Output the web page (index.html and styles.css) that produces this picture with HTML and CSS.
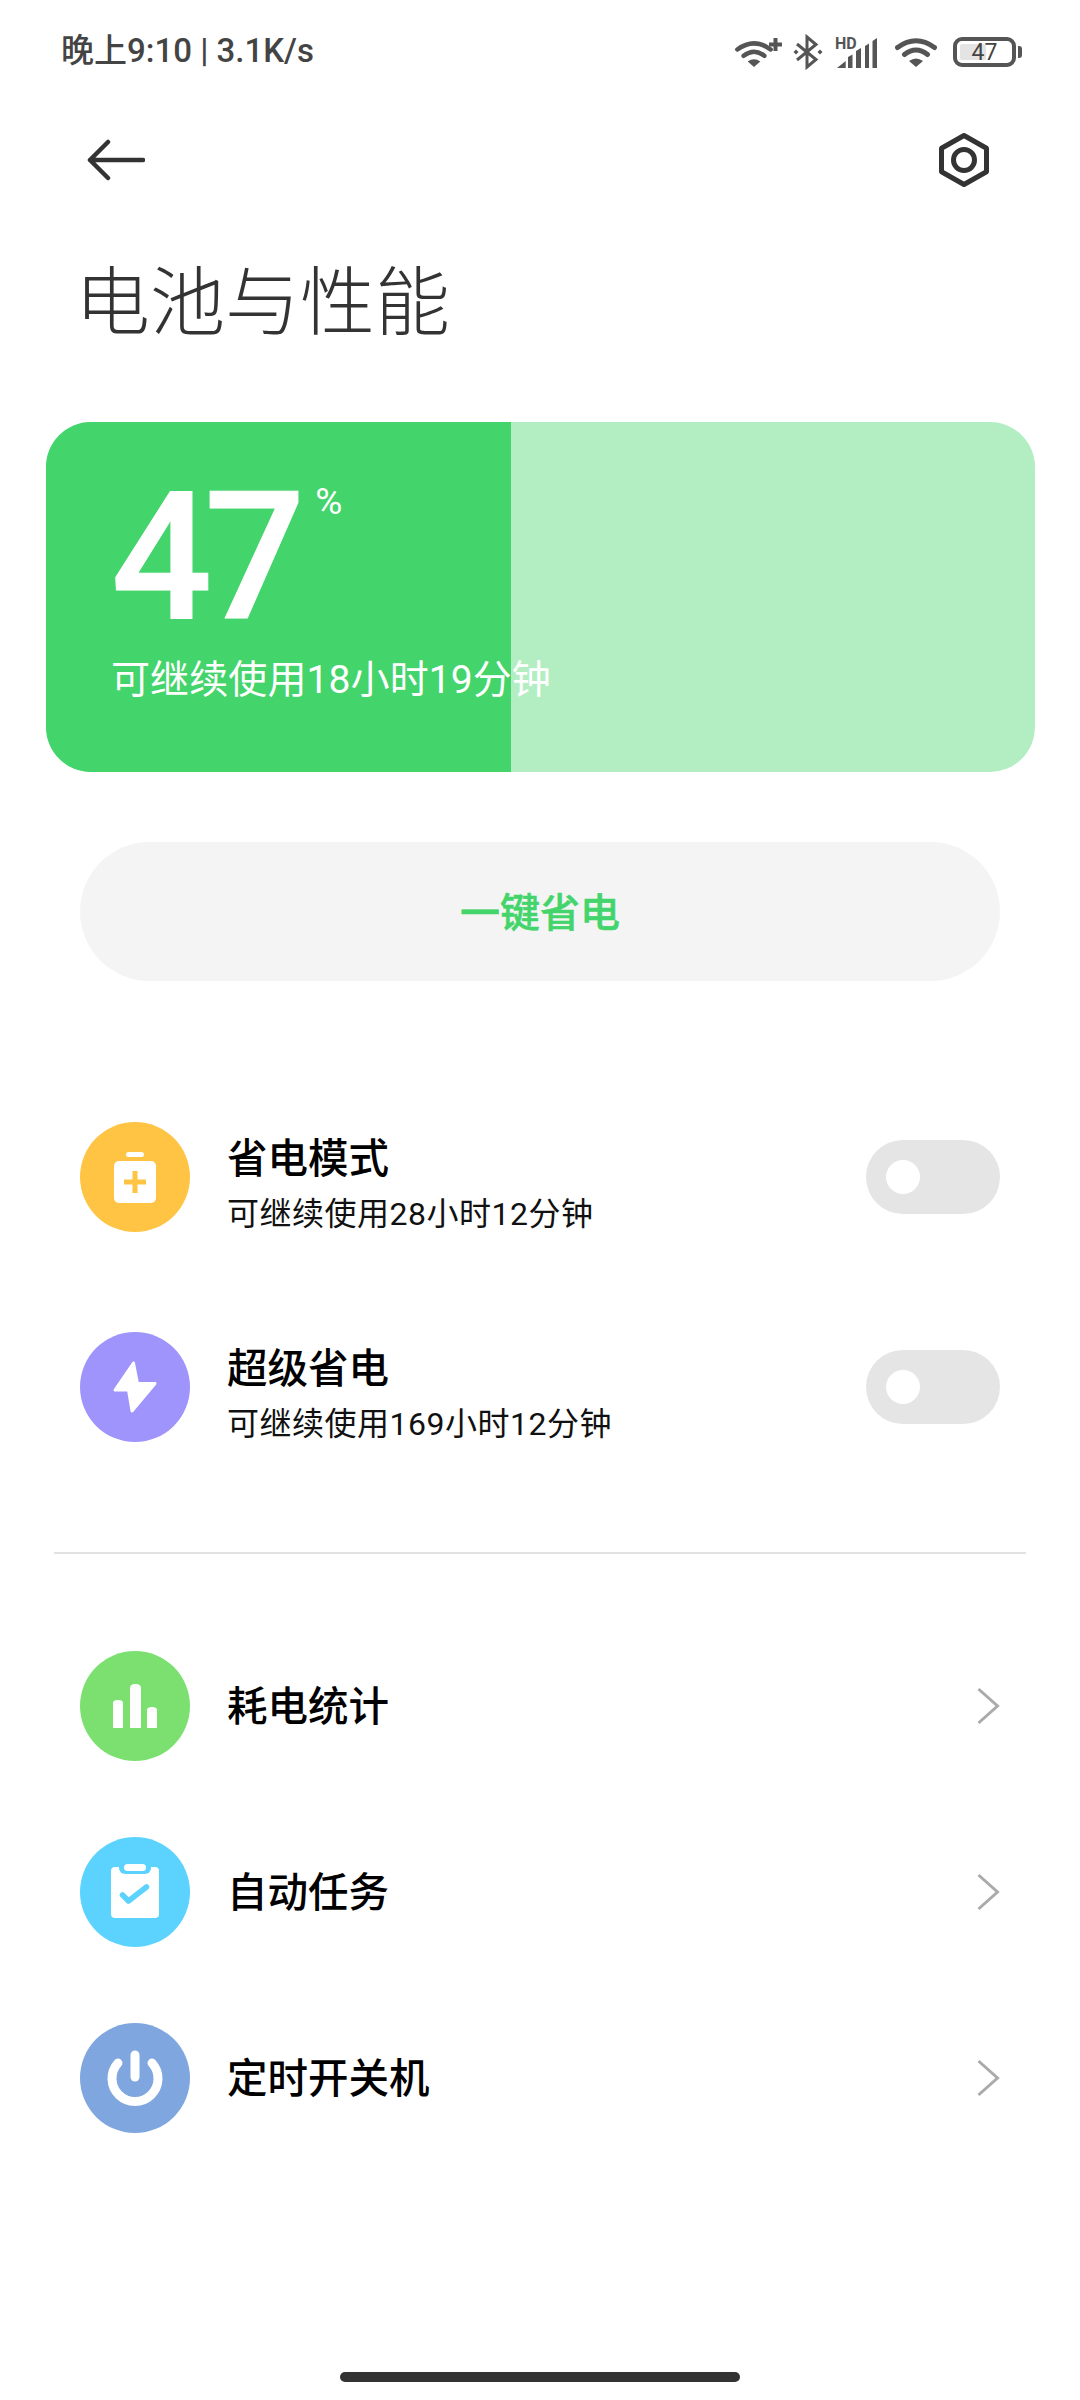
FILE: index.html
```html
<!DOCTYPE html>
<html lang="zh-CN">
<head>
  <meta charset="UTF-8" />
  <meta name="viewport" content="width=device-width, initial-scale=1.0" />
  <title>电池与性能</title>
  <link rel="stylesheet" href="styles.css">
</head>
<body>
  <svg class="icon-defs" width="0" height="0">
    <symbol id="wifi" viewBox="0 0 42 30">
      <path d="M2.500 10.500Q21 -3 39.500 10.500M9.500 17.500Q21 8.500 32.500 17.500" fill="none" stroke="#555" stroke-width="5" stroke-linecap="round"/>
      <path d="M14 24Q21 19 28 24L21 30Z" fill="#555"/>
    </symbol>
    <symbol id="chevron" viewBox="0 0 24 38">
      <path d="M2.500 2L21.500 19L2.500 36" fill="none" stroke="#aaa" stroke-width="3"/>
    </symbol>
  </svg>

  <div class="phone">
    <!-- Status bar -->
    <div class="status-bar">
      <span class="status-text">晚上9:10 | 3.1K/s</span>
      <div class="status-icons">
        <svg class="ic-wifi-plus" width="48" height="30" viewBox="0 0 48 30">
          <use href="#wifi" width="38" height="27" y="3"/>
          <path d="M34 7.500H47M40.500 1V14" stroke="#555" stroke-width="4" fill="none"/>
        </svg>
        <svg class="ic-bt" width="30" height="34" viewBox="0 0 30 34">
          <path d="M4 9L23 24.500L14 32V2L23 9.500L4 25" fill="none" stroke="#555" stroke-width="3"/>
          <path d="M3 14.500L5.500 17L3 19.500L.5 17ZM27 14.500L29.500 17L27 19.500L24.500 17Z" fill="#555"/>
        </svg>
        <svg class="ic-signal" width="44" height="32" viewBox="0 0 44 32">
          <text class="hd-label" x="0" y="13">HD</text>
          <path d="M2 32L10.700 25V32ZM13 32V21L17.500 18.500V32ZM21 32V15L26 12V32ZM30 32V10L34 7.500V32ZM37.500 32V5L42 2V32Z" fill="#555"/>
        </svg>
        <svg class="ic-wifi" width="42" height="30"><use href="#wifi"/></svg>
        <div class="battery">
          <div class="battery-body">
            <div class="battery-level" style="width: 47%"></div>
            <span class="battery-num">47</span>
          </div>
          <div class="battery-nub"></div>
        </div>
      </div>
    </div>

    <!-- Nav -->
    <div class="nav-bar">
      <svg width="58" height="42" viewBox="0 0 58 42">
        <path d="M56 21H3M21 3L3 21L21 39" fill="none" stroke="#333" stroke-width="4.500" stroke-linecap="round" stroke-linejoin="round"/>
      </svg>
      <svg width="52" height="56" viewBox="0 0 52 56">
        <path d="M26 3.500L48.500 16.200V39.800L26 52.500L3.500 39.800V16.200Z" fill="none" stroke="#333" stroke-width="5" stroke-linejoin="round"/>
        <circle cx="26" cy="28" r="10.500" fill="none" stroke="#333" stroke-width="5"/>
      </svg>
    </div>

    <h1 class="page-title">电池与性能</h1>

    <!-- Battery card -->
    <div class="battery-card">
      <div class="battery-card-fill" style="width: 47%"></div>
      <div class="battery-card-content">
        <div class="percent-line">
          <span class="percent-num">47</span>
          <span class="percent-sign">%</span>
        </div>
        <div class="percent-desc">可继续使用18小时19分钟</div>
      </div>
    </div>

    <div class="save-btn">一键省电</div>

    <!-- Power modes -->
    <div class="mode-list">
      <div class="row row-mode">
        <div class="circle circle-yellow">
          <svg width="110" height="110" viewBox="0 0 110 110">
            <rect x="46" y="30" width="18" height="5" rx="2.500" fill="#fff"/>
            <rect x="34" y="39" width="42" height="42" rx="5" fill="#fff"/>
            <path d="M44 60H66M55 49V71" stroke="#FFC444" stroke-width="5"/>
          </svg>
        </div>
        <div class="row-text">
          <div class="row-title">省电模式</div>
          <div class="row-sub">可继续使用28小时12分钟</div>
        </div>
        <div class="toggle"><div class="toggle-knob"></div></div>
      </div>
      <div class="row row-mode">
        <div class="circle circle-purple">
          <svg width="110" height="110" viewBox="0 0 110 110">
            <path d="M53.500 31L35 58H48.500L52 79L75 51.500H57.500Z" fill="#fff" stroke="#fff" stroke-width="3" stroke-linejoin="round"/>
          </svg>
        </div>
        <div class="row-text">
          <div class="row-title">超级省电</div>
          <div class="row-sub">可继续使用169小时12分钟</div>
        </div>
        <div class="toggle"><div class="toggle-knob"></div></div>
      </div>
    </div>

    <div class="divider"></div>

    <!-- Links -->
    <div class="link-list">
      <div class="row row-link">
        <div class="circle circle-green">
          <svg width="110" height="110" viewBox="0 0 110 110">
            <path d="M33 52Q33 49 38 49Q43 49 43 52V77H33ZM50 37Q50 33 55.500 33Q61 33 61 37V77H50ZM67 59Q67 56 72 56Q77 56 77 59V77H67Z" fill="#fff"/>
          </svg>
        </div>
        <div class="row-title">耗电统计</div>
        <svg class="chevron" width="24" height="38"><use href="#chevron"/></svg>
      </div>
      <div class="row row-link">
        <div class="circle circle-cyan">
          <svg width="110" height="110" viewBox="0 0 110 110">
            <rect x="31" y="30" width="48" height="51" rx="4" fill="#fff"/>
            <rect x="39" y="24" width="32" height="13" rx="6" fill="#5CD3FF"/>
            <rect x="44" y="27" width="22" height="7" rx="3.500" fill="#fff"/>
            <path d="M42.500 58L48.500 64L66.500 50" fill="none" stroke="#5CD3FF" stroke-width="5.500" stroke-linecap="round" stroke-linejoin="round"/>
          </svg>
        </div>
        <div class="row-title">自动任务</div>
        <svg class="chevron" width="24" height="38"><use href="#chevron"/></svg>
      </div>
      <div class="row row-link">
        <div class="circle circle-blue">
          <svg width="110" height="110" viewBox="0 0 110 110">
            <path d="M38 40A23 23 0 1 0 72 40" fill="none" stroke="#fff" stroke-width="9" stroke-linecap="round"/>
            <path d="M55 32V54" stroke="#fff" stroke-width="9" stroke-linecap="round"/>
          </svg>
        </div>
        <div class="row-title">定时开关机</div>
        <svg class="chevron" width="24" height="38"><use href="#chevron"/></svg>
      </div>
    </div>

    <div class="home-bar"></div>
  </div>
</body>
</html>
```

FILE: styles.css
```css
* { margin: 0; padding: 0; box-sizing: border-box; }
body {
  background-color: #fff;
  font-family: Roboto, "Noto Sans CJK SC", sans-serif;
}
.icon-defs { position: absolute; }
.phone {
  width: 1080px;
  height: 2400px;
  display: flex;
  flex-direction: column;
  overflow: hidden;
}

/* status bar */
.status-bar {
  height: 104px;
  padding: 0 58px 0 61px;
  display: flex;
  align-items: center;
  justify-content: space-between;
}
.status-text { font-size: 33px; line-height: 40px; margin-top: -2px; font-weight: 500; color: #444; }
.status-icons { display: flex; align-items: center; }
.status-icons svg { display: block; overflow: visible; }
.ic-bt { margin-left: 10px; }
.ic-signal { margin-left: 12px; }
.ic-wifi { margin-left: 16px; }
.hd-label { font-size: 16px; font-weight: 700; fill: #555; }
.battery { margin-left: 16px; display: flex; align-items: center; gap: 2px; }
.battery-body {
  position: relative;
  width: 63px;
  height: 30px;
  border: 4px solid #555;
  border-radius: 9px;
  display: flex;
  align-items: center;
  justify-content: center;
}
.battery-level {
  position: absolute;
  left: 3px;
  top: 3px;
  bottom: 3px;
  background-color: #e4e4e4;
  border-radius: 2px;
}
.battery-num { position: relative; font-size: 23px; color: #444; line-height: 1; }
.battery-nub { width: 4px; height: 12px; background-color: #555; border-radius: 0 3px 3px 0; }

/* nav */
.nav-bar {
  height: 112px;
  padding: 0 90px 0 87px;
  display: flex;
  align-items: center;
  justify-content: space-between;
}
.page-title {
  margin: 37px 0 0 75px;
  height: 100px;
  font-size: 75px;
  line-height: 100px;
  font-weight: 300;
  color: #333;
}

/* battery card */
.battery-card {
  position: relative;
  margin: 69px 45px 0 46px;
  height: 350px;
  background-color: #B3EEC3;
  border-radius: 45px;
  overflow: hidden;
}
.battery-card-fill {
  position: absolute;
  left: 0;
  top: 0;
  bottom: 0;
  background-color: #43D46B;
}
.battery-card-content {
  position: relative;
  padding: 35px 0 0 65px;
  color: #fff;
}
.percent-line { display: flex; align-items: flex-start; height: 198px; }
.percent-num {
  font-size: 178px;
  line-height: 200px;
  font-weight: 500;
  letter-spacing: -8px;
  -webkit-text-stroke: 1px #fff;
}
.percent-sign { margin: 25px 0 0 18px; font-size: 37px; line-height: 40px; }
.percent-desc { font-size: 39px; line-height: 50px; letter-spacing: 0.1px; }

.save-btn {
  margin: 70px 80px 0;
  height: 139px;
  padding-bottom: 4px;
  border-radius: 70px;
  background-color: #f4f4f4;
  color: #43D46B;
  font-size: 40px;
  font-weight: 500;
  -webkit-text-stroke: 0.5px #43D46B;
  display: flex;
  align-items: center;
  justify-content: center;
}

/* rows */
.mode-list { margin-top: 91px; }
.row { display: flex; align-items: center; padding: 0 80px; }
.row-mode { height: 210px; }
.row-link { height: 186px; }
.circle { width: 110px; height: 110px; border-radius: 50%; flex-shrink: 0; }
.circle svg { display: block; }
.circle-yellow { background-color: #FFC444; }
.circle-purple { background-color: #9F94FC; }
.circle-green { background-color: #7BE070; }
.circle-cyan { background-color: #5CD3FF; }
.circle-blue { background-color: #7FA6DE; }
.row-text { flex: 1; }
.row-link .row-title { flex: 1; margin: 1px 0 0 37px; }
.row-mode .row-text { margin-left: 37px; padding-top: 13px; }
.row-title { font-size: 40.500px; line-height: 56px; font-weight: 500; color: #000; }
.row-sub { font-size: 32px; line-height: 46px; margin-top: 4px; color: #111; letter-spacing: 0.5px; }
.toggle {
  width: 134px;
  height: 74px;
  border-radius: 37px;
  background-color: #e5e5e5;
  display: flex;
  align-items: center;
  padding-left: 20px;
}
.toggle-knob { width: 34px; height: 34px; border-radius: 50%; background-color: #fff; }
.divider { margin: 60px 54px 0; height: 2px; background-color: #e2e2e2; }
.link-list { margin-top: 59px; }
.chevron { display: block; }
.home-bar {
  margin: auto auto 18px;
  width: 400px;
  height: 10px;
  border-radius: 5px;
  background-color: #333;
}
```
